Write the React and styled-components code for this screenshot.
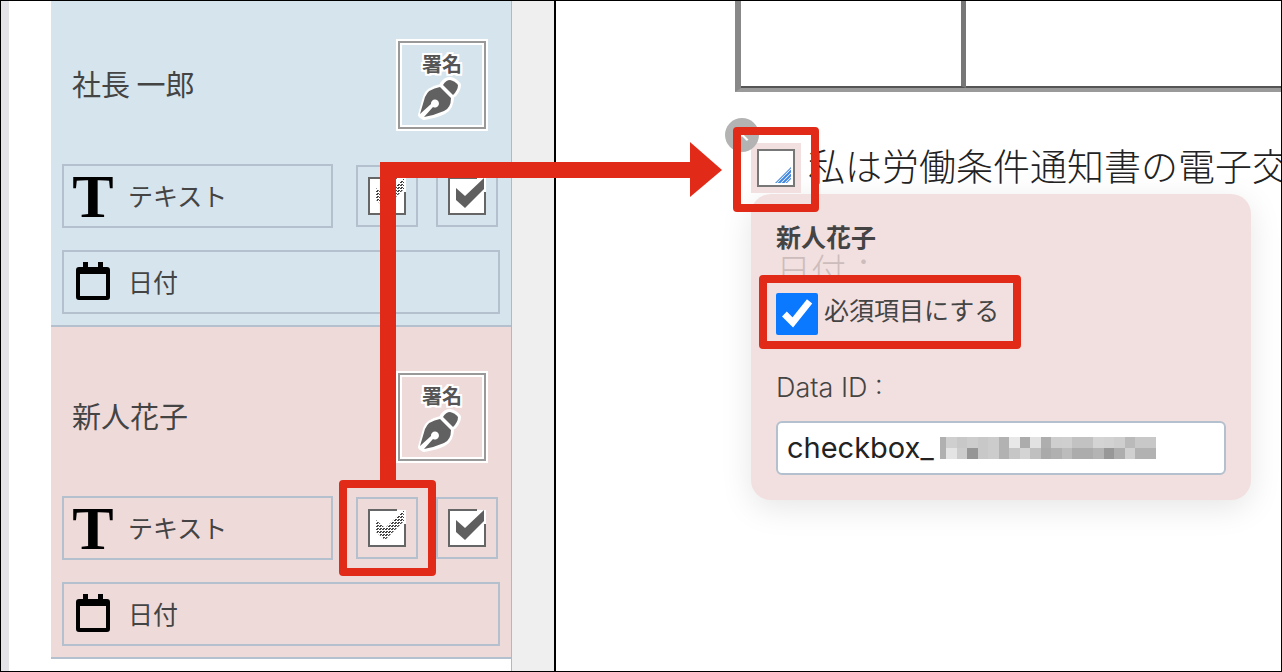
import styled, { createGlobalStyle } from "styled-components";

const GlobalStyle = createGlobalStyle`
  *, *::before, *::after {
    box-sizing: border-box;
  }
  body {
    margin: 0;
    font-family: "Inter", "Noto Sans CJK JP", sans-serif;
    color: #444;
  }
`;

const RED = "#e12b18";

const signers = [
  { name: "社長 一郎", color: "#d6e4ed", clipped: true },
  { name: "新人花子", color: "#efdada", marked: true },
];

// grey levels of the blocks that hide the id
const MASK_ROWS = [
  [176, 207, 200, 205, 200, 204, 178, 232, 172, 226, 174, 206, 207, 194, 194, 212, 210, 206, 186, 200, 200],
  [176, 228, 204, 150, 200, 204, 178, 198, 212, 192, 170, 176, 188, 172, 172, 180, 152, 174, 208, 178, 178],
];

const PenIcon = () => (
  <svg width="44" height="44" viewBox="0 0 44 44" aria-hidden="true">
    <g stroke="#fff" strokeWidth="6" strokeLinejoin="round" fill="#fff">
      <path d="M3 38L8 20Q10 13 23 10L33 20Q33 30 26 34Q18 38 6 40Z" />
      <path d="M25 7Q28 3 32 3Q37 4 40 8Q40 12 36 17Z" />
    </g>
    <path
      fill="#616161"
      d="M2 37L7 20Q10 12 22 10L33 21Q33 31 26 34Q17 38 6 40L15 30A4 4 0 1 0 13 27Z"
    />
    <path fill="#616161" d="M25 8Q28 3 32 3Q37 4 40 8Q40 13 35 18Z" />
  </svg>
);

const CalendarIcon = () => (
  <svg width="34" height="40" viewBox="0 0 34 40" aria-hidden="true">
    <path
      fillRule="evenodd"
      d="M7 1h5v5h10V1h5v5h4a3 3 0 0 1 3 3v27a3 3 0 0 1-3 3H3a3 3 0 0 1-3-3V9a3 3 0 0 1 3-3h4z M4 13v22h26V13z"
    />
  </svg>
);

const CheckIcon = ({ hatched }) => (
  <svg width="40" height="40" viewBox="0 0 40 40" aria-hidden="true">
    <defs>
      <pattern id="hatch" width="3" height="3" patternUnits="userSpaceOnUse">
        <path d="M0 0h2v1h-2z M1 2h2v1h-2z" fill="#444" />
      </pattern>
    </defs>
    <path fill="#fff" d="M2 2h37v37H2z" />
    <path d="M30 2H2v36h36V16" fill="none" stroke="#666" strokeWidth="2" />
    <path
      d="M9 12l9 8L37 2v11L18 32 9 24z"
      fill={hatched ? "url(#hatch)" : "#5f5f5f"}
    />
  </svg>
);

const FieldIcon = () => (
  <svg width="38" height="38" viewBox="0 0 38 38" aria-hidden="true">
    <defs>
      <pattern id="grip" width="4" height="4" patternUnits="userSpaceOnUse">
        <path d="M-1 5L5 -1M-1 1L1 -1M3 5L5 3" stroke="#3f86e0" strokeWidth="2" />
      </pattern>
    </defs>
    <path d="M1 1h36v36H1z" fill="#fff" stroke="#777" strokeWidth="2" />
    <path d="M18 34L34 18V30L30 34Z" fill="url(#grip)" />
  </svg>
);

const Arrow = () => (
  <ArrowLayer width="400" height="360" viewBox="0 0 400 360" aria-hidden="true">
    <path d="M57 346V32H362" fill="none" stroke={RED} strokeWidth="16" />
    <path d="M359 4L391 32L359 59z" fill={RED} />
  </ArrowLayer>
);

const MaskedText = () => (
  <Mask width="216" height="22" viewBox="0 0 206 22" preserveAspectRatio="none" aria-hidden="true" shapeRendering="crispEdges">
    {MASK_ROWS.map((row, y) =>
      row.map((v, x) => (
        <rect
          key={`${x}-${y}`}
          x={x ? x * 10 - 4 : 0}
          y={y * 11}
          width="10"
          height="11"
          fill={`rgb(${v},${v},${v})`}
        />
      ))
    )}
  </Mask>
);

const SignerCard = ({ signer }) => (
  <Signer $color={signer.color} $clipped={signer.clipped}>
    <SignerHead>
      <SignerName>{signer.name}</SignerName>
      <SignButton type="button">
        <span>署名</span>
        <PenIcon />
      </SignButton>
    </SignerHead>
    <PartRow>
      <PartButton type="button">
        <BigT>T</BigT>
        テキスト
      </PartButton>
      <CheckButton type="button" aria-label="チェック">
        <CheckIcon hatched />
        {signer.marked && <Mark $inset="-19px -20px -19px -19px" />}
      </CheckButton>
      <CheckButton type="button" aria-label="チェック">
        <CheckIcon />
      </CheckButton>
    </PartRow>
    <PartButton type="button">
      <IconSlot>
        <CalendarIcon />
      </IconSlot>
      日付
    </PartButton>
  </Signer>
);

const App = () => {
  return (
    <>
      <GlobalStyle />
      <Page>
        <Sidebar>
          <Signers>
            {signers.map((signer) => (
              <SignerCard key={signer.name} signer={signer} />
            ))}
          </Signers>
          <Gutter />
        </Sidebar>
        <Document>
          <Grid>
            <div />
            <div />
          </Grid>
          <Line>
            <Field>
              <Remove type="button" aria-label="削除">×</Remove>
              <FieldIcon />
              <Mark $inset="-16px -18px -19px" />
            </Field>
            <Sentence>私は労働条件通知書の電子交</Sentence>
          </Line>
          <Popover>
            <Title>新人花子</Title>
            <Behind>日付：</Behind>
            <Required>
              <input type="checkbox" defaultChecked />
              必須項目にする
              <Mark $inset="-18px -22px -14px -17px" />
            </Required>
            <Label htmlFor="data-id">Data ID :</Label>
            <IdBox>
              <input id="data-id" defaultValue="checkbox_" />
              <MaskedText />
            </IdBox>
          </Popover>
        </Document>
        <Arrow />
      </Page>
    </>
  );
};

export default App;

const Page = styled.div`
  position: relative;
  display: flex;
  min-height: 100vh;
  border: 1px solid #000;
  background: #fff;
  overflow: hidden;
`;

const Sidebar = styled.div`
  display: flex;
  flex: 0 0 555px;
  border-left: 8px solid #e3e3e8;
  border-right: 2px solid #000;
  padding-left: 42px;
`;

const Signers = styled.div`
  flex: 1;
  border-right: 1px solid #a9bbc9;
`;

const Gutter = styled.div`
  width: 42px;
  background: #efefef;
`;

const Signer = styled.section`
  display: flex;
  flex-direction: column;
  background: ${({ $color }) => $color};
  border-bottom: 2px solid #b4c0cd;
  padding: ${({ $clipped }) => ($clipped ? "40px" : "46px")} 11px 11px;
`;

const SignerHead = styled.div`
  display: flex;
  justify-content: space-between;
  align-items: center;
  margin-bottom: 35px;
  padding: 0 14px 0 10px;
`;

const SignerName = styled.div`
  padding-bottom: 4px;
  font: 29px/40px "Noto Sans CJK JP", sans-serif;
`;

const SignButton = styled.button`
  display: flex;
  flex-direction: column;
  align-items: center;
  width: 88px;
  height: 88px;
  padding: 8px 0 0;
  border: 2px solid #999;
  outline: 2px solid #fff;
  box-shadow: inset 0 0 0 2px #fff;
  background: none;
  font: bold 20px/26px "Noto Sans CJK JP", sans-serif;
  color: #555;
  span {
    text-shadow: 2px 0 #fff, -2px 0 #fff, 0 2px #fff, 0 -2px #fff, 2px 2px #fff,
      -2px -2px #fff, 2px -2px #fff, -2px 2px #fff;
  }
  svg {
    margin-right: 4px;
  }
`;

const PartRow = styled.div`
  display: flex;
  align-items: center;
  gap: 18px;
  margin-bottom: 22px;
  padding-right: 2px;
`;

const PartButton = styled.button`
  display: flex;
  flex: 1;
  align-items: center;
  gap: 14px;
  height: 64px;
  min-height: 64px;
  padding: 0 8px 2px;
  border: 2px solid #b4c0cd;
  background: none;
  font: 25px/36px "Noto Sans CJK JP", sans-serif;
  color: #444;
  ${PartRow} & {
    margin-right: 5px;
  }
`;

const BigT = styled.span`
  width: 42px;
  padding-top: 2px;
  font: bold 62px/60px "Liberation Serif", serif;
  color: #000;
`;

const IconSlot = styled.span`
  display: flex;
  justify-content: center;
  width: 42px;
`;

const CheckButton = styled.button`
  position: relative;
  display: flex;
  justify-content: center;
  align-items: center;
  width: 62px;
  height: 62px;
  padding: 0;
  border: 2px solid #b4c0cd;
  background: none;
`;

const Mark = styled.span`
  position: absolute;
  inset: ${({ $inset }) => $inset};
  border: 8px solid ${RED};
  border-radius: 4px;
  pointer-events: none;
`;

const ArrowLayer = styled.svg`
  position: absolute;
  top: 137px;
  left: 330px;
  pointer-events: none;
`;

const Document = styled.main`
  flex: 1;
  min-width: 0;
`;

const Grid = styled.div`
  display: flex;
  height: 91px;
  margin-left: 179px;
  border-left: 6px solid #888;
  border-bottom: 4px solid #9a9a9a;
  div {
    flex: 1;
    border-bottom: 2px solid #555;
  }
  div:first-child {
    flex: 0 0 225px;
    border-right: 5px solid #777;
  }
`;

const Line = styled.div`
  display: flex;
  gap: 7px;
  height: 50px;
  margin: 51px 0 1px 195px;
`;

const Field = styled.div`
  position: relative;
  display: flex;
  flex: none;
  justify-content: center;
  align-items: center;
  width: 50px;
  height: 50px;
  background: #f2e0e0;
`;

const Remove = styled.button`
  position: absolute;
  top: -25px;
  left: -26px;
  width: 34px;
  height: 34px;
  padding: 0;
  border: 0;
  border-radius: 50%;
  background: #b3b3b3;
  font: 28px/30px "Liberation Sans", sans-serif;
  color: #fff;
`;

const Sentence = styled.div`
  overflow: hidden;
  white-space: nowrap;
  font: 300 37px/44px "Noto Sans CJK JP", sans-serif;
  color: #222;
`;

const Popover = styled.div`
  display: flex;
  flex-direction: column;
  align-items: flex-start;
  width: 500px;
  margin-left: 195px;
  padding: 30px 25px 25px;
  border-radius: 20px;
  background: #f2e0e0;
  box-shadow: 0 8px 32px rgba(0, 0, 0, 0.1);
  font-size: 25px;
`;

const Title = styled.div`
  font-weight: bold;
  line-height: 28px;
`;

const Behind = styled.div`
  height: 24px;
  overflow: hidden;
  font: 300 35px/34px "Noto Sans CJK JP", sans-serif;
  color: #cdbcbc;
`;

const Required = styled.label`
  position: relative;
  display: flex;
  gap: 6px;
  margin: 17px 0 32px;
  line-height: 36px;
  input {
    width: 42px;
    height: 42px;
    margin: 0;
    accent-color: #0a78ff;
  }
`;

const Label = styled.label`
  font-size: 27px;
  font-weight: 300;
  line-height: 42px;
`;

const IdBox = styled.div`
  display: flex;
  align-items: center;
  align-self: stretch;
  height: 54px;
  margin-top: 12px;
  padding: 0 9px;
  border: 2px solid #b4c0cd;
  border-radius: 6px;
  background: #fff;
  input {
    width: 153px;
    padding: 0;
    border: 0;
    outline: 0;
    background: none;
    font: 29px/40px "Inter", sans-serif;
    color: #222;
  }
`;

const Mask = styled.svg`
  flex: none;
`;
